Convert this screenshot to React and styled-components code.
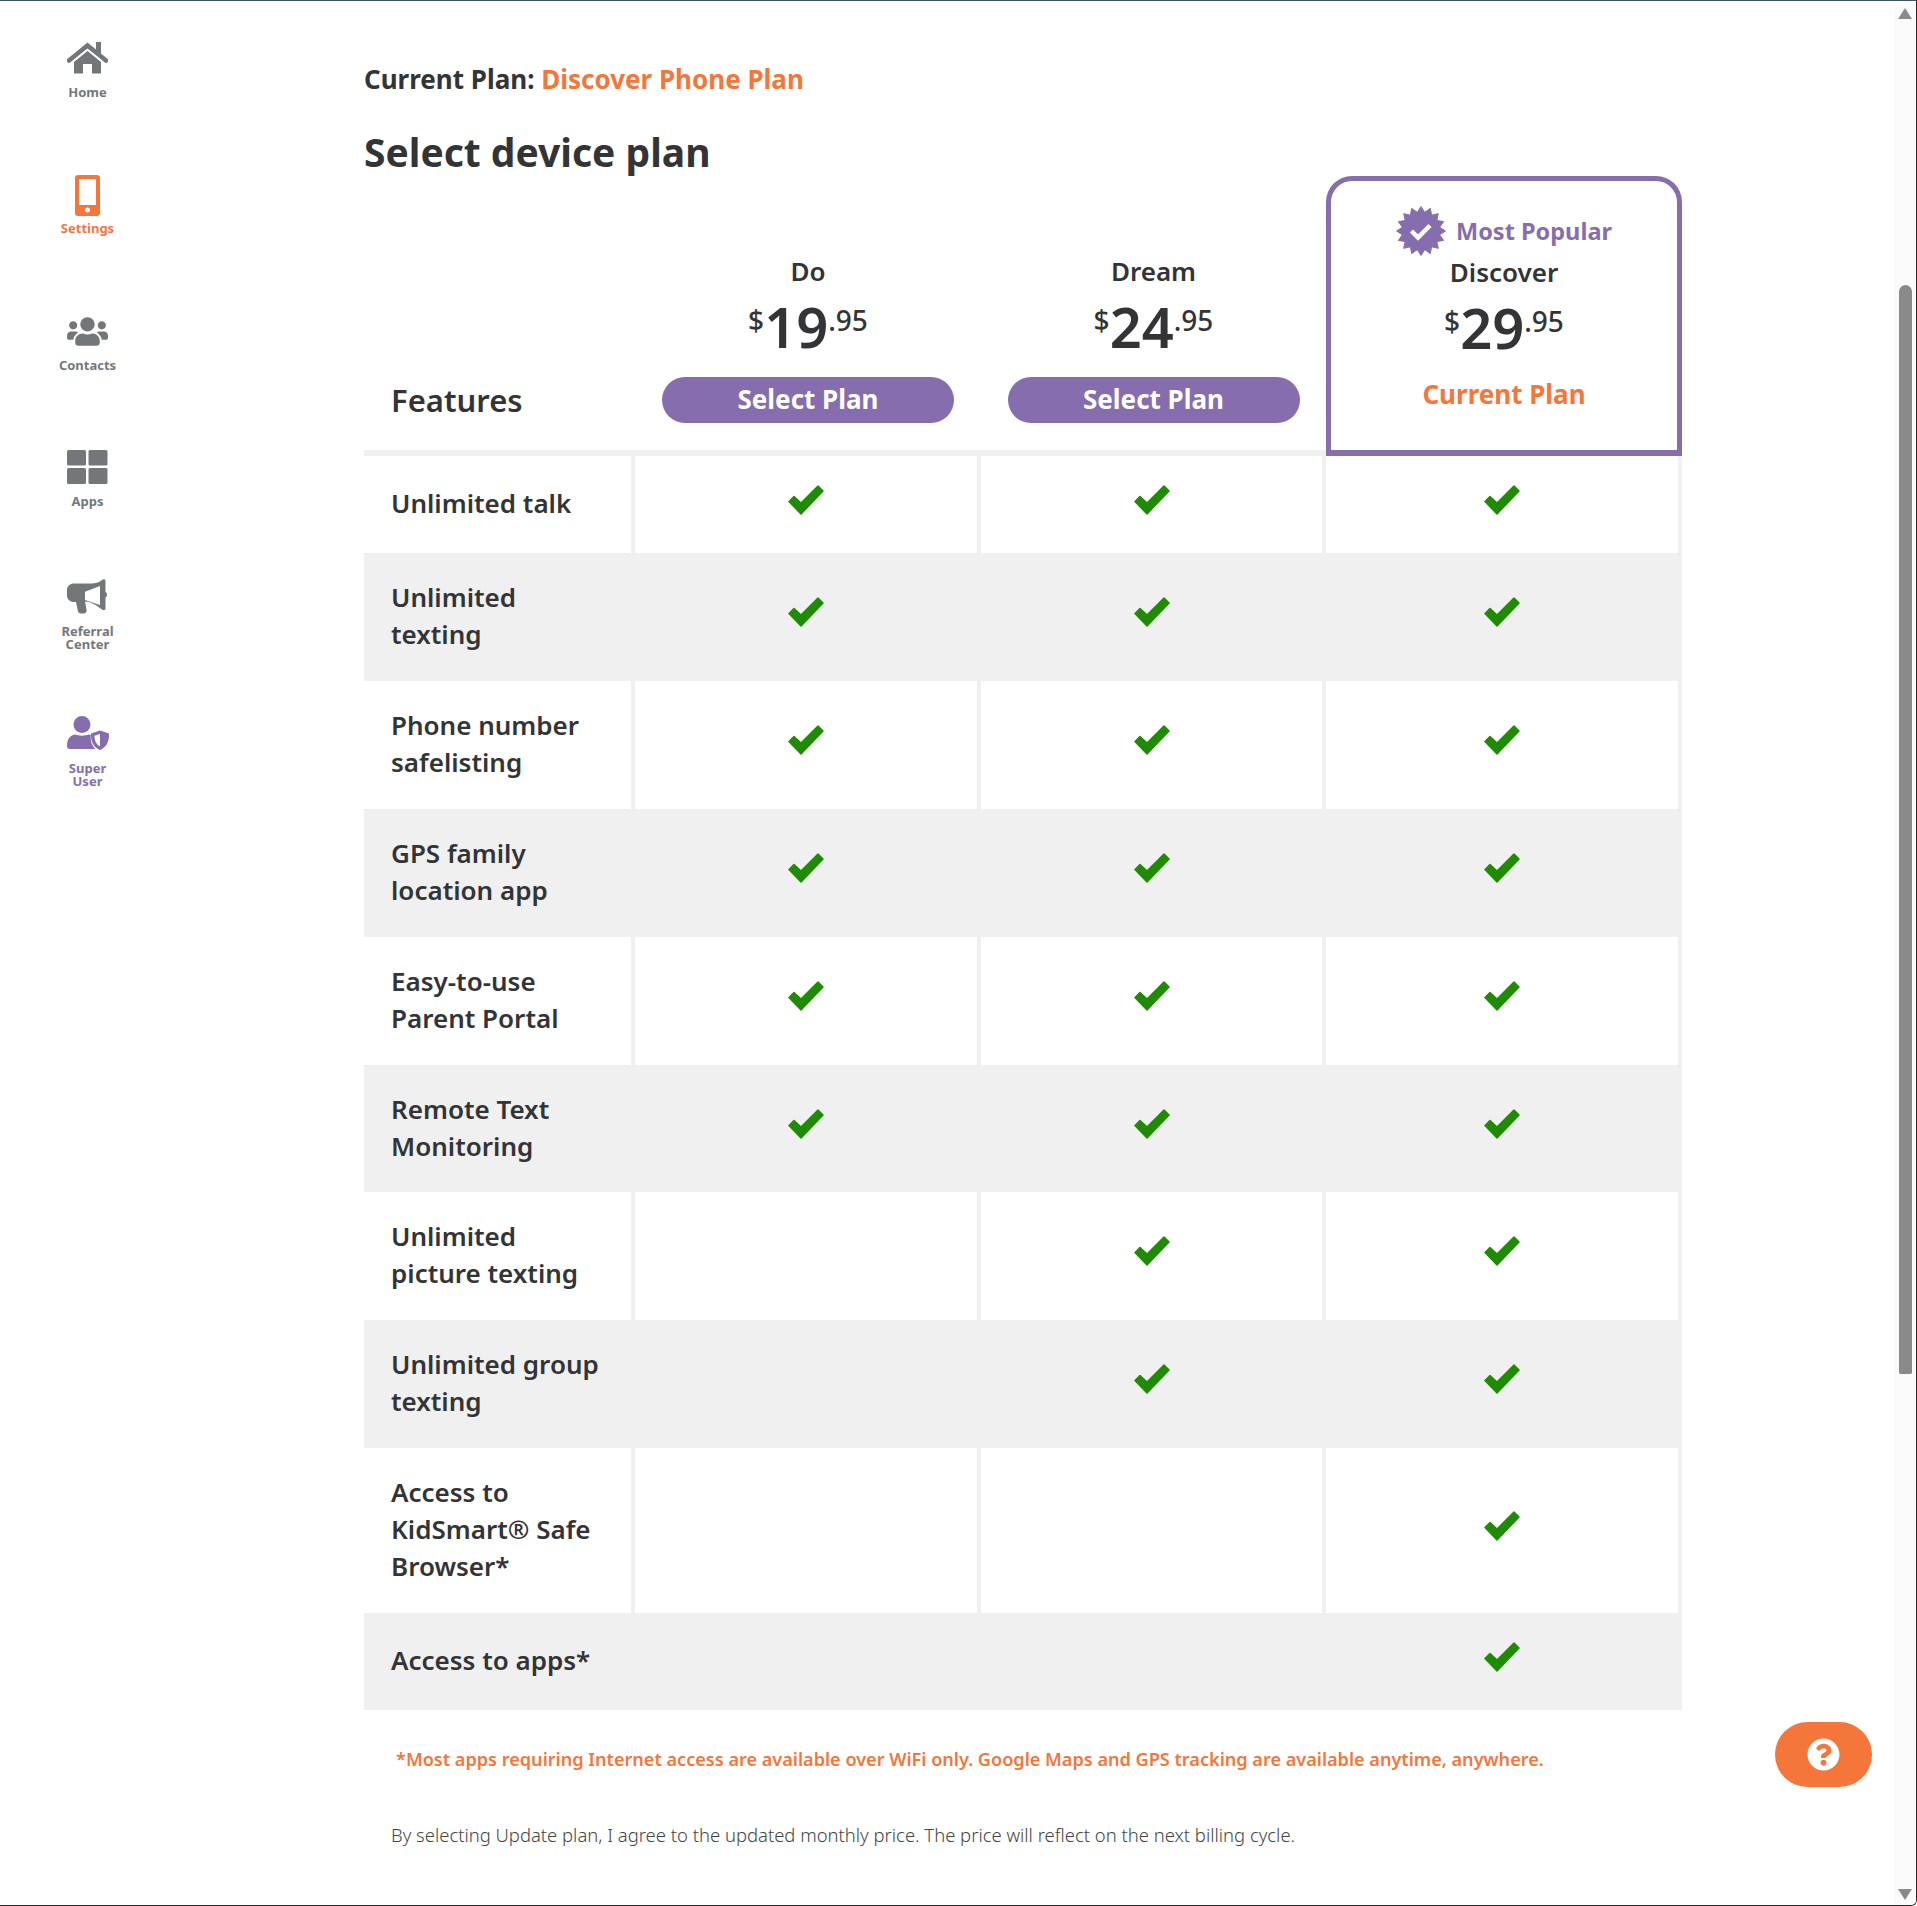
import React from "react";
import styled, { createGlobalStyle } from "styled-components";
import { FaUsers, FaQuestionCircle } from "react-icons/fa";

const purple = "#866eae";
const orange = "#f5763a";
const ink = "#333436";
const grey = "#f0f0f0";
const navGrey = "#74777a";

const GlobalStyle = createGlobalStyle`
  html, body { margin: 0; padding: 0; background: #fff; }
  * { box-sizing: border-box; }
  body { font-family: "Noto Sans", "Open Sans", sans-serif; color: ${ink}; }
`;

const features = [
  { name: ["Unlimited talk"], plans: [1, 1, 1], height: 97 },
  { name: ["Unlimited", "texting"], plans: [1, 1, 1], height: 128 },
  { name: ["Phone number", "safelisting"], plans: [1, 1, 1], height: 128 },
  { name: ["GPS family", "location app"], plans: [1, 1, 1], height: 128 },
  { name: ["Easy-to-use", "Parent Portal"], plans: [1, 1, 1], height: 128 },
  { name: ["Remote Text", "Monitoring"], plans: [1, 1, 1], height: 127 },
  { name: ["Unlimited", "picture texting"], plans: [0, 1, 1], height: 128 },
  { name: ["Unlimited group", "texting"], plans: [0, 1, 1], height: 128 },
  { name: ["Access to", "KidSmart® Safe", "Browser*"], plans: [0, 0, 1], height: 165 },
  { name: ["Access to apps*"], plans: [0, 0, 1], height: 97 },
];

const starPoints = () => {
  const pts = [];
  for (let i = 0; i < 32; i++) {
    const r = i % 2 === 0 ? 24.500 : 19;
    const a = (Math.PI * 2 * i) / 32 - Math.PI / 2;
    pts.push(`${25 + r * Math.cos(a)},${25 + r * Math.sin(a)}`);
  }
  return pts.join(" ");
};

const HomeIcon = () => (
  <svg width="41" height="32" viewBox="0 0 41 32">
    <rect x="29" y="0" width="5" height="11" fill={navGrey} />
    <path d="M2 18.500L20.500 3.500 39 18.500" fill="none" stroke={navGrey} strokeWidth="4.500" strokeLinecap="round" />
    <path fill={navGrey} d="M7 20l13.500-11L34 20v11.500h-9V22h-9v9.500H7z" />
  </svg>
);

const PhoneIcon = () => (
  <svg width="25" height="41" viewBox="0 0 25 41">
    <path
      fill={orange}
      fillRule="evenodd"
      d="M3 0h19a3 3 0 0 1 3 3v35a3 3 0 0 1-3 3H3a3 3 0 0 1-3-3V3a3 3 0 0 1 3-3zM4 4v26h17V4zm8.500 28.500a2.500 2.500 0 1 0 0 5 2.500 2.500 0 0 0 0-5z"
    />
  </svg>
);

const AppsIcon = () => (
  <svg width="41" height="34" viewBox="0 0 41 34" fill={navGrey}>
    <rect width="19" height="15.500" rx="1.500" />
    <rect x="21.500" width="19" height="15.500" rx="1.500" />
    <rect y="18" width="19" height="16" rx="1.500" />
    <rect x="21.500" y="18" width="19" height="16" rx="1.500" />
  </svg>
);

const MegaphoneIcon = () => (
  <svg width="41" height="35" viewBox="0 0 41 35">
    <path
      fill={navGrey}
      fillRule="evenodd"
      d="M35 1c1.500-1.300 3.500-.8 3.500 1.200V13c2 .8 2 4.500 0 5.500v11c0 1.600-1.800 2.200-3.200 1.200-4.300-3-8.300-6-13.300-7.700l-4-.5 1.500 8c.4 2-.6 4-2.600 4h-3c-1.700 0-2.700-1-3-2.500L9 23H7c-3.800 0-7-2.500-7-6.500V11c0-4 3-6.500 7-6.500h11C24 4.500 30.500 5 35 1zM33 7l-15 5.700V21l15 5z"
    />
  </svg>
);

const SuperUserIcon = () => (
  <svg width="42" height="34" viewBox="0 0 42 34">
    <circle cx="15" cy="8.500" r="8.500" fill={purple} />
    <path fill={purple} d="M3 33c-1.800 0-3-1.200-3-3 0-7 3-10.500 8-11.500 4 1.500 10 1.500 14 0 .6.100 1.200.3 1.800.5-.5 5 .6 10 4.500 14z" />
    <path
      fill={purple}
      fillRule="evenodd"
      d="M33 14.500l9 3c.300 7.500-2 13.500-9 16.500-7-3-9.300-9-9-16.500zM33 18l-5.500 1.800c0 4.500 1.500 8.500 5.500 10.500z"
    />
  </svg>
);

const BadgeIcon = () => (
  <svg width="50" height="50" viewBox="0 0 50 50">
    <polygon points={starPoints()} fill={purple} strokeLinejoin="round" stroke={purple} strokeWidth="1" />
    <path d="M15.500 25l6.500 6.500L34 19.500" fill="none" stroke="#fff" strokeWidth="4.500" />
  </svg>
);

const CheckIcon = () => (
  <svg width="36" height="30" viewBox="0 0 36 30">
    <path
      fill="#1e8c00"
      stroke="#1e8c00"
      strokeWidth="1.500"
      strokeLinejoin="round"
      d="M1 16.500L6 11.500 13 18 30 1 35 6 13 29z"
    />
  </svg>
);

const navItems = [
  { label: ["Home"], icon: <HomeIcon />, gap: 5, color: navGrey },
  { label: ["Settings"], icon: <PhoneIcon />, gap: 0, color: orange },
  { label: ["Contacts"], icon: <FaUsers size={41} />, gap: 0, color: navGrey },
  { label: ["Apps"], icon: <AppsIcon />, gap: 5, color: navGrey },
  { label: ["Referral", "Center"], icon: <MegaphoneIcon />, gap: 11, color: navGrey },
  { label: ["Super", "User"], icon: <SuperUserIcon />, gap: 12, color: purple },
];

const plans = [
  { name: "Do", dollars: "19" },
  { name: "Dream", dollars: "24" },
];

const Price = ({ dollars }) => (
  <PriceRow>
    <PriceSmall>$</PriceSmall>
    <PriceBig>{dollars}</PriceBig>
    <PriceSmall>.95</PriceSmall>
  </PriceRow>
);

export default function App() {
  return (
    <>
      <GlobalStyle />
      <Page>
        <Nav>
          {navItems.map((item) => (
            <NavItem key={item.label[0]} $color={item.color}>
              <NavIcon $gap={item.gap}>{item.icon}</NavIcon>
              <NavLabel>
                {item.label.map((line) => (
                  <span key={line}>{line}</span>
                ))}
              </NavLabel>
            </NavItem>
          ))}
        </Nav>

        <Main>
          <CurrentPlan>
            Current Plan: <Accent>Discover Phone Plan</Accent>
          </CurrentPlan>
          <Title>Select device plan</Title>

          <Table>
            <HeaderRow>
              <FeaturesHead>Features</FeaturesHead>
              {plans.map((plan) => (
                <PlanHead key={plan.name}>
                  <PlanName>{plan.name}</PlanName>
                  <Price dollars={plan.dollars} />
                  <SelectButton>Select Plan</SelectButton>
                </PlanHead>
              ))}
              <PopularHead>
                <PopularRow>
                  <BadgeIcon />
                  <PopularText>Most Popular</PopularText>
                </PopularRow>
                <PopularName>Discover</PopularName>
                <Price dollars="29" />
                <CurrentLabel>Current Plan</CurrentLabel>
              </PopularHead>
            </HeaderRow>

            {features.map((row, i) => (
              <Row key={row.name[0] + i} $shaded={i % 2 === 1} $height={row.height}>
                <FeatureCell>
                  {row.name.map((line) => (
                    <span key={line}>{line}</span>
                  ))}
                </FeatureCell>
                {row.plans.map((on, j) => (
                  <CheckCell key={j}>{on ? <CheckIcon /> : null}</CheckCell>
                ))}
              </Row>
            ))}
          </Table>

          <Footnote>
            *Most apps requiring Internet access are available over WiFi only. Google Maps and GPS
            tracking are available anytime, anywhere.
          </Footnote>
          <Agreement>
            By selecting Update plan, I agree to the updated monthly price. The price will reflect on
            the next billing cycle.
          </Agreement>
        </Main>

        <Scrollbar>
          <ArrowUp />
          <Thumb />
          <ArrowDown />
        </Scrollbar>

        <HelpButton aria-label="Help">
          <FaQuestionCircle size={33} color="#fff" />
        </HelpButton>
      </Page>
    </>
  );
}

const Page = styled.div`
  position: relative;
  display: flex;
  width: 1917px;
  height: 1906px;
  overflow: hidden;
  background: #fff;
  border-top: 1px solid #3f5560;
  border-right: 1px solid #2a2a2a;
  border-bottom: 1px solid #2a2a2a;
  border-bottom-right-radius: 6px;
`;

const Nav = styled.nav`
  flex: 0 0 175px;
  display: grid;
  grid-template-rows: 104px repeat(5, 136.500px);
  align-content: start;
`;

const NavItem = styled.div`
  display: flex;
  flex-direction: column;
  align-items: center;
  justify-content: flex-end;
  color: ${(p) => p.$color};
`;

const NavIcon = styled.div`
  display: flex;
  justify-content: center;
  margin-bottom: ${(p) => p.$gap}px;
`;

const NavLabel = styled.div`
  height: 26px;
  display: flex;
  flex-direction: column;
  align-items: center;
  justify-content: center;
  font-size: 13px;
  line-height: 13px;
  font-weight: 700;
`;

const Main = styled.main`
  flex: 0 0 1318px;
  margin-left: 189px;
  padding-top: 60px;
`;

const CurrentPlan = styled.div`
  font-size: 26px;
  line-height: 36px;
  font-weight: 700;
`;

const Accent = styled.span`
  color: ${orange};
`;

const Title = styled.h1`
  margin: 30px 0 0;
  font-size: 39px;
  line-height: 50px;
  font-weight: 700;
`;

const Table = styled.div`
  margin-top: -1px;
`;

const HeaderRow = styled.div`
  display: grid;
  grid-template-columns: 271px 346px 345px 356px;
  height: 280px;
`;

const FeaturesHead = styled.div`
  display: flex;
  align-items: flex-end;
  padding: 0 0 30px 27px;
  font-size: 31px;
  line-height: 40px;
  font-weight: 600;
  border-bottom: 6px solid ${grey};
`;

const PlanHead = styled.div`
  display: flex;
  flex-direction: column;
  align-items: center;
  padding-top: 77px;
  border-bottom: 6px solid ${grey};
`;

const PlanName = styled.div`
  font-size: 26px;
  line-height: 36px;
  font-weight: 600;
`;

const PriceRow = styled.div`
  display: flex;
  align-items: flex-start;
  height: 67px;
  margin-top: 4px;
`;

const PriceBig = styled.span`
  font-size: 56px;
  line-height: 67px;
  font-weight: 600;
`;

const PriceSmall = styled.span`
  font-size: 28px;
  line-height: 54px;
  font-weight: 500;
`;

const SelectButton = styled.button`
  width: 292px;
  height: 46px;
  margin-top: 17px;
  padding: 0 0 2px;
  border: 0;
  border-radius: 23px;
  background: ${purple};
  color: #fff;
  font: 700 26px "Noto Sans", sans-serif;
  line-height: 42px;
  cursor: pointer;
`;

const PopularHead = styled.div`
  display: flex;
  flex-direction: column;
  align-items: center;
  padding-top: 25px;
  border: 5px solid ${purple};
  border-bottom-width: 6px;
  border-radius: 26px 26px 0 0;
`;

const PopularRow = styled.div`
  display: flex;
  align-items: center;
  gap: 10px;
  height: 50px;
`;

const PopularText = styled.span`
  color: ${purple};
  font-size: 23.500px;
  font-weight: 700;
`;

const PopularName = styled.div`
  margin: -2px 0 0;
  font-size: 26px;
  line-height: 36px;
  font-weight: 600;
`;

const CurrentLabel = styled.div`
  margin-top: 15px;
  color: ${orange};
  font-size: 26px;
  line-height: 36px;
  font-weight: 700;
`;

const Row = styled.div`
  display: grid;
  grid-template-columns: 271px 346px 345px 356px;
  height: ${(p) => p.$height}px;
  background: ${(p) => (p.$shaded ? grey : "#fff")};
`;

const FeatureCell = styled.div`
  display: flex;
  flex-direction: column;
  justify-content: center;
  padding: 0 0 2px 27px;
  font-size: 26px;
  line-height: 37px;
  font-weight: 600;
  border-right: 4px solid ${grey};
`;

const CheckCell = styled.div`
  display: flex;
  align-items: center;
  justify-content: center;
  padding-bottom: 10px;
  border-right: 4px solid ${grey};
`;

const Footnote = styled.p`
  margin: 34px 0 0 32px;
  color: ${orange};
  font-size: 18.100px;
  line-height: 30px;
  font-weight: 600;
`;

const Agreement = styled.p`
  margin: 46px 0 0 27px;
  color: #444;
  font-size: 18.450px;
  line-height: 30px;
  font-weight: 300;
`;

const Scrollbar = styled.div`
  position: absolute;
  top: 0;
  right: 0;
  bottom: 0;
  width: 22px;
  display: flex;
  flex-direction: column;
  align-items: center;
  background: #fbfbfb;
`;

const ArrowUp = styled.div`
  width: 0;
  height: 0;
  margin-top: 7px;
  border-left: 7.500px solid transparent;
  border-right: 7.500px solid transparent;
  border-bottom: 11px solid #8a8a8a;
`;

const Thumb = styled.div`
  width: 13px;
  height: 1089px;
  margin-top: 266px;
  border-radius: 7px 7px 2px 2px;
  background: #8a8a8a;
`;

const ArrowDown = styled.div`
  width: 0;
  height: 0;
  margin-top: auto;
  margin-bottom: 5px;
  border-left: 7.500px solid transparent;
  border-right: 7.500px solid transparent;
  border-top: 11px solid #8a8a8a;
`;

const HelpButton = styled.button`
  position: absolute;
  left: 1775px;
  top: 1721px;
  width: 97px;
  height: 65px;
  display: flex;
  align-items: center;
  justify-content: center;
  border: 0;
  border-radius: 33px;
  background: ${orange};
  cursor: pointer;
`;
